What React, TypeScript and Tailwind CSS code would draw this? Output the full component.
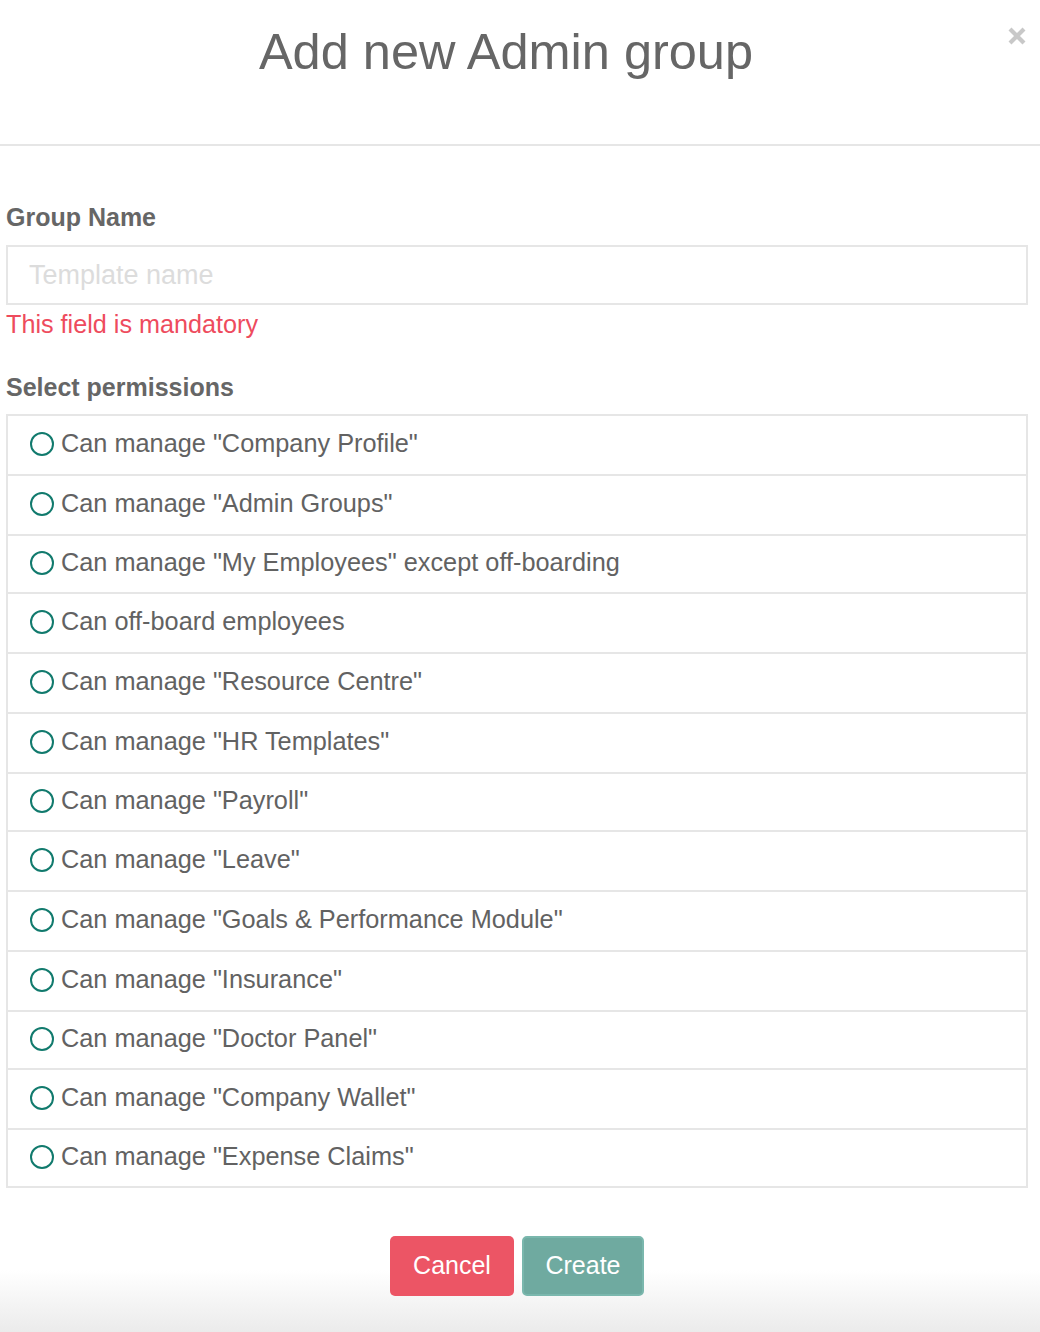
import React from "react";

const permissions: { label: string; h: string }[] = [
  { label: 'Can manage "Company Profile"', h: "h-[60px]" },
  { label: 'Can manage "Admin Groups"', h: "h-[60px]" },
  { label: 'Can manage "My Employees" except off-boarding', h: "h-[58px]" },
  { label: "Can off-board employees", h: "h-[60px]" },
  { label: 'Can manage "Resource Centre"', h: "h-[60px]" },
  { label: 'Can manage "HR Templates"', h: "h-[60px]" },
  { label: 'Can manage "Payroll"', h: "h-[58px]" },
  { label: 'Can manage "Leave"', h: "h-[60px]" },
  { label: 'Can manage "Goals & Performance Module"', h: "h-[60px]" },
  { label: 'Can manage "Insurance"', h: "h-[60px]" },
  { label: 'Can manage "Doctor Panel"', h: "h-[58px]" },
  { label: 'Can manage "Company Wallet"', h: "h-[60px]" },
  { label: 'Can manage "Expense Claims"', h: "h-[58px]" },
];

function CloseIcon() {
  return (
    <svg width="20" height="20" viewBox="0 0 20 20" fill="none">
      <path d="M3 3L17 17M17 3L3 17" stroke="#c8c8c8" strokeWidth="4.2" strokeLinecap="butt" />
    </svg>
  );
}

export default function App() {
  return (
    <div className="w-[1040px] h-[1332px] bg-white text-[#666] font-['Liberation_Sans',Arial,sans-serif] flex flex-col">
      <div className="relative h-[146px] shrink-0 border-b-2 border-[#e6e6e6] pt-[27px] pr-[28px] flex justify-center">
        <h2 className="text-[50.5px] leading-none text-[#666]">Add new Admin group</h2>
        <button className="absolute right-[13px] top-[26px]" title="Close">
          <CloseIcon />
        </button>
      </div>

      <div className="flex-1 pl-[6px] pr-[12px] pt-[59px]">
        <label className="block text-[25px] leading-[25px] font-bold text-[#666]">Group Name</label>
        <div className="mt-[15px] h-[60px] border-2 border-[#e6e6e6] flex items-center pl-[21px]">
          <input
            className="w-full outline-none text-[27px] placeholder:text-[#dcdcdc] bg-transparent"
            placeholder="Template name"
          />
        </div>
        <p className="mt-[7px] text-[25.2px] leading-[25px] text-[#ee4b5d]">This field is mandatory</p>

        <p className="mt-[38px] text-[25px] leading-[25px] font-bold text-[#666]">Select permissions</p>
        <div className="mt-[14px] border-x-2 border-t-2 border-[#e6e6e6]">
          {permissions.map((permission) => (
            <div
              key={permission.label}
              className={`${permission.h} border-b-2 border-[#e6e6e6] flex items-center pl-[22px] gap-[7px]`}
            >
              <span className="w-[24px] h-[24px] rounded-full border-2 border-[#117a6d] shrink-0 -mt-[2px]" />
              <span className="text-[25.3px] leading-none text-[#626262] -mt-[3px]">{permission.label}</span>
            </div>
          ))}
        </div>
      </div>

      <div className="h-[144px] shrink-0 pt-[48px] pr-[6px] flex justify-center gap-[8px] bg-gradient-to-b from-white from-[57%] to-[#ebebeb]">
        <button className="w-[124px] h-[60px] rounded-[5px] bg-[#ec5565] text-white text-[25px]">Cancel</button>
        <button className="w-[122px] h-[60px] rounded-[5px] bg-[#6faaa0] border-2 border-[#7ab7ad] text-white text-[25px]">
          Create
        </button>
      </div>
    </div>
  );
}
